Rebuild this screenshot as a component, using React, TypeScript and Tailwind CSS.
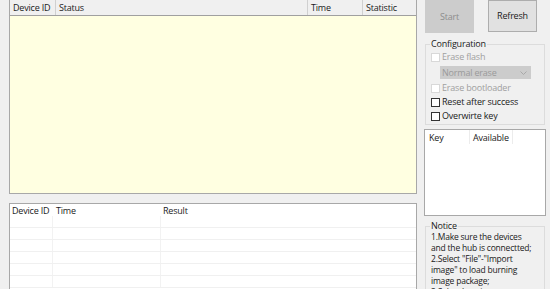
import React from "react";

const font = { fontFamily: '"Open Sans", "Noto Sans", sans-serif' };

const Check = ({ label, disabled }: { label: string; disabled?: boolean }) => (
  <div className={`flex items-center gap-[2px] h-[14px] ${disabled ? "text-[#a0a0a0]" : "text-[#1a1a1a]"}`}>
    <span
      className={`w-[9px] h-[9px] border bg-white ${disabled ? "border-[#d8d8d8]" : "border-[#333]"}`}
    />
    <span>{label}</span>
  </div>
);

export default function App() {
  const rows = [0, 1, 2, 3, 4, 5];
  return (
    <div
      className="w-[550px] h-[289px] bg-[#f0f0f0] overflow-hidden flex text-[9px] tracking-[-0.2px] leading-[12px] text-[#1a1a1a] whitespace-nowrap"
      style={font}
    >
      {/* left: tables */}
      <div className="ml-[9px] w-[408px] flex flex-col">
        {/* running devices */}
        <div className="h-[194px] shrink-0 flex flex-col border-l border-r border-b border-[#a8a8a8] bg-[#ffffe1]">
          <div className="h-[16px] flex bg-[#f0f0f0] border-b border-[#a0a0a0]">
            <div className="w-[46px] pl-[3px] pt-[2px] border-r border-[#d0d0d0]">Device ID</div>
            <div className="w-[252px] pl-[3px] pt-[2px] border-r border-[#d0d0d0]">Status</div>
            <div className="w-[55px] pl-[3px] pt-[2px] border-r border-[#d0d0d0]">Time</div>
            <div className="flex-1 pl-[3px] pt-[2px]">Statistic</div>
          </div>
          <div className="flex-1" />
        </div>

        {/* history */}
        <div className="mt-[9px] flex-1 bg-white border-l border-t border-r border-[#a8a8a8] flex flex-col">
          <div className="h-[12px] shrink-0 flex">
            <div className="w-[43px] pl-[2px] pt-[1px]">Device ID</div>
            <div className="w-[108px] pl-[3px] pt-[1px]">Time</div>
            <div className="flex-1 pl-[2px] pt-[1px]">Result</div>
          </div>
          {rows.map((r) => (
            <div key={r} className="h-[12px] flex border-b border-[#f0f0f0] shrink-0">
              <div className="w-[43px] border-r border-[#f2f2f2]" />
              <div className="w-[108px] border-r border-[#f2f2f2]" />
              <div className="flex-1" />
            </div>
          ))}
        </div>
      </div>

      {/* right: controls */}
      <div className="ml-[7px] w-[122px] flex flex-col">
        <div className="flex gap-[14px] ml-[1px] shrink-0">
          <button className="w-[49px] h-[33px] bg-[#cccccc] text-[#8c8c8c]">Start</button>
          <button className="w-[49px] h-[32px] bg-[#e1e1e1] border border-[#adadad] text-[#1a1a1a]">
            Refresh
          </button>
        </div>

        {/* configuration */}
        <div className="relative shrink-0 mt-[11px] ml-[1px] w-[120px] h-[81px] border border-[#dcdcdc] pt-[5px] pl-[5px]">
          <span className="absolute -top-[7px] left-[4px] bg-[#f0f0f0] px-[1px]">Configuration</span>
          <Check label="Erase flash" disabled />
          <div className="mt-[2px] ml-[9px] w-[91px] h-[13px] bg-[#cccccc] text-[#9a9a9a] flex items-center justify-between pl-[2px] pr-[4px]">
            <span>Normal erase</span>
            <svg width="7" height="4" viewBox="0 0 7 4">
              <path d="M0.5 0.5 L3.5 3.5 L6.5 0.5" fill="none" stroke="#a8a8a8" strokeWidth="1" />
            </svg>
          </div>
          <div className="mt-[2px]">
            <Check label="Erase bootloader" disabled />
          </div>
          <Check label="Reset after success" />
          <Check label="Overwirte key" />
        </div>

        {/* keys */}
        <div className="shrink-0 mt-[4px] w-[122px] h-[87px] bg-white border border-[#a8a8a8]">
          <div className="flex h-[14px]">
            <div className="w-[44px] pl-[4px] pt-[2px]">Key</div>
            <div className="w-[44px] pl-[3px] pt-[2px] border-l border-r border-[#ececec]">Available</div>
          </div>
        </div>

        {/* notice */}
        <div className="relative shrink-0 mt-[10px] ml-[1px] w-[120px] h-[80px] border border-[#dcdcdc] pt-[4px] pl-[5px] text-[8.5px] leading-[11px]">
          <span className="absolute -top-[7px] left-[4px] bg-[#f0f0f0] px-[1px] text-[9px] leading-[12px]">Notice</span>
          <div>1.Make sure the devices</div>
          <div>and the hub is connectted;</div>
          <div>2.Select "File"-"Import</div>
          <div>image" to load burning</div>
          <div>image package;</div>
          <div>3.Select burning</div>
        </div>
      </div>
    </div>
  );
}
